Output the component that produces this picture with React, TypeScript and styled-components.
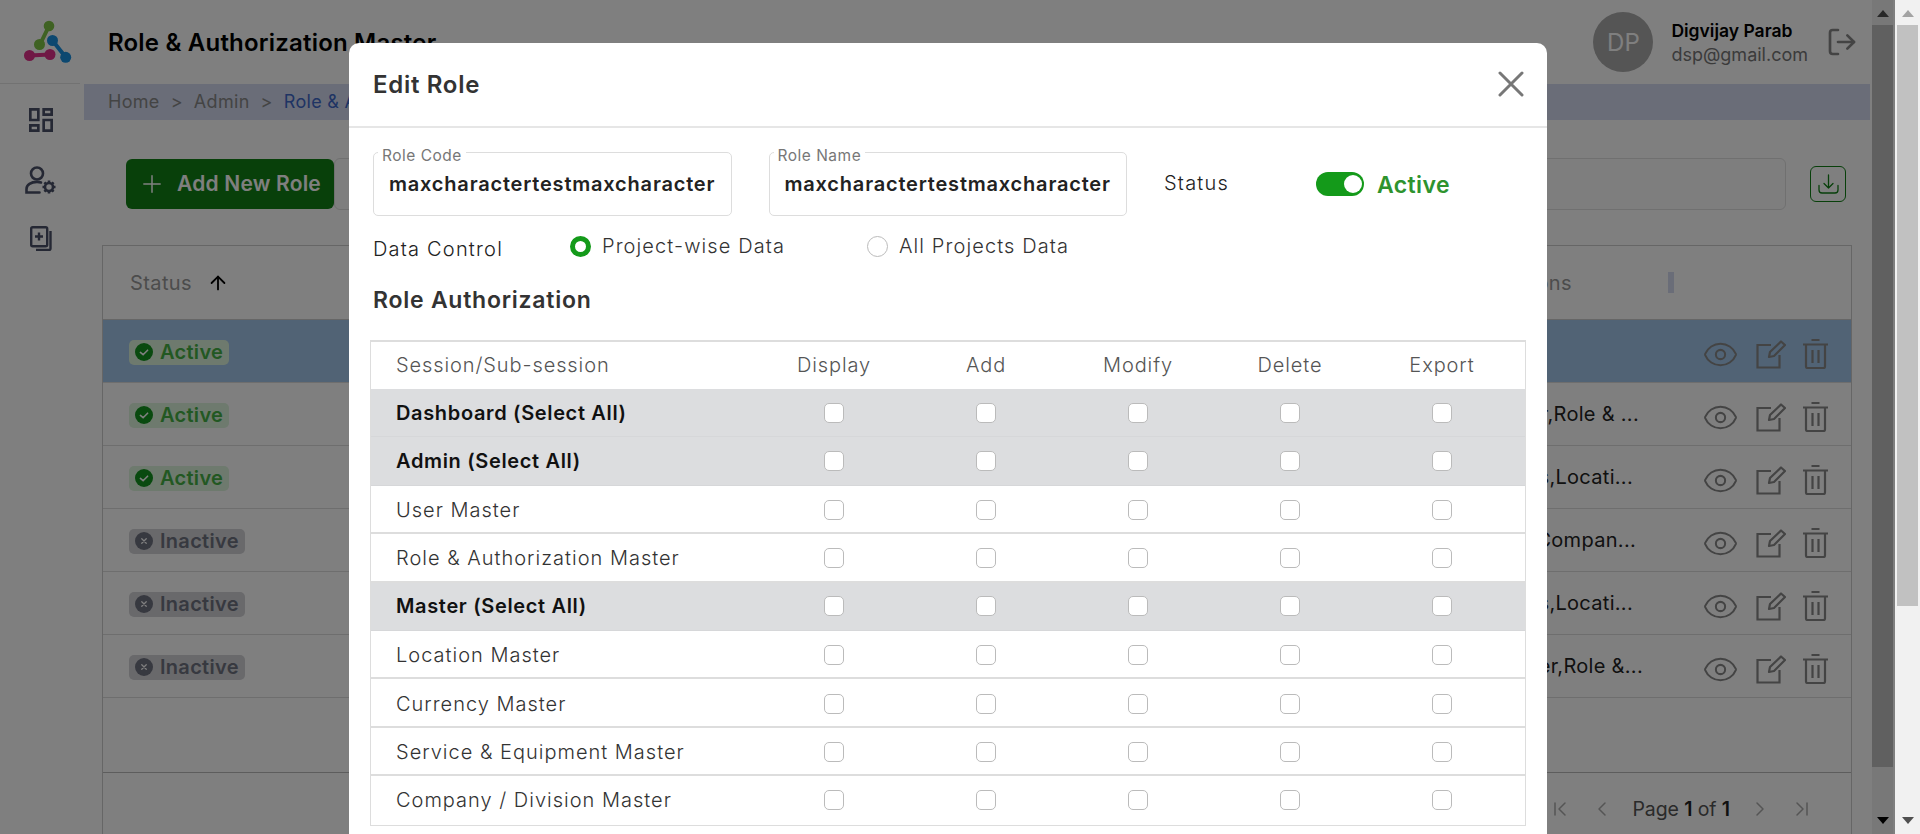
import { ArrowUp, ChevronFirst, ChevronLast, ChevronLeft, ChevronRight, Eye, LogOut, Plus } from 'lucide-react'
import { MdOutlineDashboard } from 'react-icons/md'
import styled, { createGlobalStyle } from 'styled-components'

const GlobalStyle = createGlobalStyle`
  * {
    box-sizing: border-box;
  }
  html, body {
    margin: 0;
    height: 834px;
    overflow: hidden;
    background: #fff;
    font-family: Inter, 'Open Sans', sans-serif;
    color: #222;
  }
`

type RoleRow = {
  status: 'Active' | 'Inactive'
  access: string
  end: number
  selected?: boolean
}

const roleRows: RoleRow[] = [
  { status: 'Active', access: '', end: 0, selected: true },
  { status: 'Active', access: 'Dashboard,User Master,Role & ...', end: 4 },
  { status: 'Active', access: 'Dashboard,User Masters,Locati...', end: 10 },
  { status: 'Inactive', access: 'Dashboard,Currency,Compan...', end: 7 },
  { status: 'Inactive', access: 'Dashboard,User Masters,Locati...', end: 10 },
  { status: 'Inactive', access: 'Dashboard,User Master,Role &...', end: 0 },
]

type AuthRow = {
  name: string
  group?: boolean
}

const authRows: AuthRow[] = [
  { name: 'Dashboard (Select All)', group: true },
  { name: 'Admin (Select All)', group: true },
  { name: 'User Master' },
  { name: 'Role & Authorization Master' },
  { name: 'Master (Select All)', group: true },
  { name: 'Location Master' },
  { name: 'Currency Master' },
  { name: 'Service & Equipment Master' },
  { name: 'Company / Division Master' },
]

const permissions = ['Display', 'Add', 'Modify', 'Delete', 'Export']

const Logo = () => (
  <svg width="48" height="46" viewBox="24 20 48 46">
    <g strokeLinecap="round">
      <line x1="49" y1="26" x2="40" y2="44.5" stroke="#7ec446" strokeWidth="4" />
      <circle cx="49" cy="26" r="5.3" fill="#7ec446" />
      <circle cx="39.5" cy="44.5" r="5.5" fill="#7ec446" />
      <line x1="52.5" y1="40.5" x2="65.7" y2="57.3" stroke="#1890e0" strokeWidth="4" />
      <circle cx="52.5" cy="40.5" r="5.5" fill="#1890e0" />
      <circle cx="65.7" cy="57.3" r="5.5" fill="#1890e0" />
      <line x1="29.5" y1="55.5" x2="50" y2="54.5" stroke="#e0308a" strokeWidth="4" />
      <circle cx="29.5" cy="55.5" r="5.5" fill="#e0308a" />
      <circle cx="50" cy="54.5" r="5.5" fill="#e0308a" />
    </g>
  </svg>
)

const UserGearIcon = () => (
  <svg width="32" height="30" viewBox="0 0 32 30" fill="none" stroke="#4a5068" strokeWidth="2.6">
    <circle cx="12" cy="7.5" r="6" />
    <path d="M16 16.500c-1.200-.4-2.600-.6-4-.6-6 0-10.500 3-10.500 7v3.600h13" strokeLinecap="round" />
    <circle cx="24" cy="21" r="4" />
    <path
      d="M24 14.500v2.500M24 25v2.500M17.500 21h2.500M28 21h2.500M19.400 16.400l1.800 1.800M26.800 23.800l1.800 1.800M19.400 25.600l1.800-1.800M26.800 18.200l1.800-1.800"
      strokeWidth="2.600"
    />
  </svg>
)

const PagesPlusIcon = () => (
  <svg width="22" height="25" viewBox="0 0 22 25" fill="none" stroke="#4a5068" strokeWidth="2.400">
    <rect x="1.200" y="1.200" width="16" height="19" rx="1.500" />
    <path d="M20.500 5v17.500a1.500 1.500 0 0 1-1.500 1.500H6" />
    <path d="M9 6.500v8M5 10.500h8" />
  </svg>
)

const EditIcon = () => (
  <svg width="30" height="29" viewBox="0 0 30 29" fill="none" stroke="#888" strokeWidth="2.200">
    <path d="M15 5H1.500v22.500h22V15" />
    <path d="M13 17l1-5L25 1.500l4 3.500L18 16z" strokeLinejoin="round" />
  </svg>
)

const TrashIcon = () => (
  <svg width="25" height="30" viewBox="0 0 25 30" fill="none" stroke="#888" strokeWidth="2.200">
    <path d="M0 5.500h25M8.500 1h8" />
    <path d="M3 5.500v22a1.500 1.500 0 0 0 1.500 1.500h16a1.500 1.500 0 0 0 1.500-1.500v-22" />
    <path d="M9.500 11v13M15.500 11v13" />
  </svg>
)

const StatusIcon = ({ active }: { active: boolean }) => (
  <svg width="18" height="18" viewBox="0 0 20 20">
    <circle cx="10" cy="10" r="10" fill={active ? '#12941e' : '#6f7280'} />
    {active ? (
      <path d="M6 10.500l3 2.500 5-5" fill="none" stroke="#fff" strokeWidth="1.800" strokeLinecap="round" />
    ) : (
      <path d="M7.500 7.500l5 5M12.500 7.500l-5 5" fill="none" stroke="#fff" strokeWidth="1.400" strokeLinecap="round" />
    )}
  </svg>
)

const DownloadIcon = () => (
  <svg width="21" height="20" viewBox="0 0 21 20" fill="none" stroke="#108015" strokeWidth="1.300">
    <path d="M10.500 1v13M6 9.500l4.500 4.500 4.500-4.500" strokeLinecap="round" strokeLinejoin="round" />
    <path d="M1 11.500v4.500a3 3 0 0 0 3 3h13a3 3 0 0 0 3-3v-4.500" strokeLinecap="round" />
  </svg>
)

const CloseIcon = () => (
  <svg width="26" height="26" viewBox="0 0 26 26" stroke="#777" strokeWidth="3" strokeLinecap="round">
    <path d="M2 2l22 22M24 2L2 24" />
  </svg>
)

export default function App() {
  return (
    <>
      <GlobalStyle />
      <Screen>
        <Page>
          <Sidebar>
            <LogoCell>
              <Logo />
            </LogoCell>
            <SideIcons>
              <MdOutlineDashboard size={32} color="#4a5068" />
              <UserGearIcon />
              <PagesPlusIcon />
            </SideIcons>
          </Sidebar>

          <Content>
            <TopBar>
              <PageTitle>Role &amp; Authorization Master</PageTitle>
              <UserBox>
                <Avatar>DP</Avatar>
                <UserText>
                  <UserName>Digvijay Parab</UserName>
                  <UserMail>dsp@gmail.com</UserMail>
                </UserText>
                <LogOut size={32} color="#888" strokeWidth={2} />
              </UserBox>
            </TopBar>
            <Breadcrumb>
              <span>Home</span>
              <span>&gt;</span>
              <span>Admin</span>
              <span>&gt;</span>
              <CrumbActive>Role &amp; Authorization Master</CrumbActive>
            </Breadcrumb>

            <Toolbar>
              <AddButton>
                <Plus size={28} strokeWidth={1.3} />
                Add New Role
              </AddButton>
              <Search />
              <ExportButton>
                <DownloadIcon />
              </ExportButton>
            </Toolbar>

            <RolesTable>
              <RolesHead>
                <StatusHead>
                  Status <ArrowUp size={22} color="#000" strokeWidth={2} />
                </StatusHead>
                <ActionsHead>
                  Actions
                  <ColumnHandle />
                </ActionsHead>
              </RolesHead>
              {roleRows.map((row, i) => (
                <RoleLine key={i} $selected={row.selected}>
                  <Pill $active={row.status === 'Active'}>
                    <StatusIcon active={row.status === 'Active'} />
                    {row.status}
                  </Pill>
                  <AccessText $end={row.end}>{row.access}</AccessText>
                  <RowActions>
                    <Eye size={37} color="#888" strokeWidth={1.300} />
                    <EditIcon />
                    <TrashIcon />
                  </RowActions>
                </RoleLine>
              ))}
              <EmptyRow />
              <Pager>
                <ChevronFirst size={24} color="#aaa" strokeWidth={1.500} />
                <ChevronLeft size={24} color="#aaa" strokeWidth={1.500} />
                <PagerText>
                  Page <b>1</b> of <b>1</b>
                </PagerText>
                <ChevronRight size={24} color="#aaa" strokeWidth={1.500} />
                <ChevronLast size={24} color="#aaa" strokeWidth={1.500} />
              </Pager>
            </RolesTable>
          </Content>

          <InnerScrollbar>
            <ArrowUpGlyph />
            <InnerThumb />
            <ArrowDownGlyph />
          </InnerScrollbar>

          <Overlay>
            <Modal>
              <ModalHead>
                <ModalTitle>Edit Role</ModalTitle>
                <CloseIcon />
              </ModalHead>
              <ModalBody>
                <FieldRow>
                  <Field>
                    <FieldLabel>Role Code</FieldLabel>
                    maxcharactertestmaxcharacter
                  </Field>
                  <Field>
                    <FieldLabel>Role Name</FieldLabel>
                    maxcharactertestmaxcharacter
                  </Field>
                  <StatusLabel>Status</StatusLabel>
                  <Toggle />
                  <ToggleText>Active</ToggleText>
                </FieldRow>
                <ControlRow>
                  <ControlLabel>Data Control</ControlLabel>
                  <RadioOption>
                    <Radio $checked />
                    Project-wise Data
                  </RadioOption>
                  <RadioOption>
                    <Radio />
                    All Projects Data
                  </RadioOption>
                </ControlRow>
                <SectionTitle>Role Authorization</SectionTitle>
                <AuthTable>
                  <AuthHead>
                    <span>Session/Sub-session</span>
                    {permissions.map(name => (
                      <HeadCell key={name}>{name}</HeadCell>
                    ))}
                  </AuthHead>
                  {authRows.map(row => (
                    <AuthLine key={row.name} $group={row.group}>
                      <span>{row.name}</span>
                      {permissions.map(name => (
                        <CheckCell key={name}>
                          <CheckBox />
                        </CheckCell>
                      ))}
                    </AuthLine>
                  ))}
                </AuthTable>
              </ModalBody>
            </Modal>
          </Overlay>
        </Page>

        <OuterScrollbar>
          <ArrowUpGlyph $light />
          <OuterThumb />
          <ArrowDownGlyph $light />
        </OuterScrollbar>
      </Screen>
    </>
  )
}

//style
const Screen = styled.div`
  display: flex;
  width: 1920px;
  height: 834px;
  overflow: hidden;
`

const Page = styled.div`
  position: relative;
  display: flex;
  width: 1895px;
  height: 834px;
  overflow: hidden;
`

const Sidebar = styled.aside`
  flex: 0 0 84px;
  background: #fff;
`

const LogoCell = styled.div`
  height: 84px;
  padding: 20px 0 0 24px;
  margin-right: 4px;
  border-bottom: 1px solid #e4e4e4;
`

const SideIcons = styled.div`
  display: flex;
  flex-direction: column;
  align-items: center;
  gap: 30px;
  padding: 20px 3px 0 0;
`

const Content = styled.main`
  flex: 0 0 1786px;
  min-width: 0;
`

const TopBar = styled.header`
  display: flex;
  align-items: center;
  justify-content: space-between;
  height: 84px;
  padding: 0 12px 0 24px;
`

const PageTitle = styled.h1`
  margin: 0;
  font-size: 24px;
  font-weight: 600;
  letter-spacing: 0.2px;
  color: #000;
`

const UserBox = styled.div`
  display: flex;
  align-items: center;
`

const Avatar = styled.div`
  display: flex;
  align-items: center;
  justify-content: center;
  width: 60px;
  height: 60px;
  margin-right: 18px;
  border-radius: 50%;
  background: #aaa;
  font-size: 24px;
  color: #fff;
`

const UserText = styled.div`
  display: flex;
  flex-direction: column;
  gap: 3px;
  margin-right: 18px;
`

const UserName = styled.span`
  font-size: 17.5px;
  font-weight: 600;
  color: #000;
`

const UserMail = styled.span`
  font-size: 18px;
  color: #777;
`

const Breadcrumb = styled.nav`
  display: flex;
  align-items: center;
  gap: 11px;
  height: 36px;
  padding: 0 0 2px 24px;
  background: #d4dbf0;
  font-size: 18px;
  letter-spacing: 0.3px;
  color: #888;
`

const CrumbActive = styled.span`
  color: #3f68c8;
`

const Toolbar = styled.div`
  display: flex;
  align-items: center;
  height: 53px;
  margin: 37px 24px 0 42px;
`

const AddButton = styled.button`
  display: flex;
  align-items: center;
  gap: 11px;
  width: 208px;
  height: 50px;
  padding: 0 0 0 12px;
  border: 0;
  border-radius: 6px;
  background: #108015;
  font-family: inherit;
  font-size: 21px;
  font-weight: 600;
  letter-spacing: 0.2px;
  color: #fff;
`

const Search = styled.div`
  flex: 1;
  height: 52px;
  margin-right: 24px;
  border: 1px solid #e0e0e0;
  border-radius: 6px;
  background: #fdfdfd;
`

const ExportButton = styled.button`
  display: flex;
  align-items: center;
  justify-content: center;
  width: 36px;
  height: 36px;
  padding: 0;
  border: 1.500px solid #108015;
  border-radius: 6px;
  background: #fff;
`

const RolesTable = styled.section`
  width: 1750px;
  margin: 35px 0 0 18px;
  border: 1px solid #ccc;
`

const RolesHead = styled.div`
  display: flex;
  align-items: center;
  justify-content: space-between;
  height: 74px;
  border-bottom: 1px solid #ccc;
  font-size: 20px;
  letter-spacing: 0.4px;
  color: #999;
`

const StatusHead = styled.div`
  display: flex;
  align-items: center;
  gap: 15px;
  padding-left: 27px;
`

const ActionsHead = styled.div`
  display: flex;
  align-items: center;
  gap: 96px;
  padding-right: 177px;
`

const ColumnHandle = styled.i`
  width: 6px;
  height: 21px;
  background: #d4dbf0;
`

const RoleLine = styled.div<{ $selected?: boolean }>`
  display: flex;
  align-items: center;
  height: 63px;
  padding-left: 26px;
  border-bottom: 1px solid #ddd;
  background: ${p => (p.$selected ? '#a2c6ea' : '#fff')};
`

const Pill = styled.span<{ $active: boolean }>`
  display: flex;
  align-items: center;
  gap: 7px;
  height: 25px;
  margin-top: 2px;
  padding: 0 6px;
  border-radius: 5px;
  background: ${p => (p.$active ? '#dcf4dc' : '#d2d2d6')};
  font-size: 20px;
  font-weight: 600;
  letter-spacing: 0.3px;
  color: ${p => (p.$active ? '#45b045' : '#6f7280')};
`

const AccessText = styled.span<{ $end: number }>`
  flex: 1;
  padding-right: ${p => p.$end}px;
  text-align: right;
  font-size: 20px;
  letter-spacing: 0.3px;
  white-space: nowrap;
  color: #222;
`

const RowActions = styled.div`
  display: flex;
  align-items: center;
  justify-content: flex-end;
  gap: 17px;
  width: 208px;
  padding: 6px 23px 0 0;
`

const EmptyRow = styled.div`
  height: 75px;
  border-bottom: 1px solid #bbb;
`

const Pager = styled.div`
  display: flex;
  align-items: center;
  justify-content: flex-end;
  gap: 18px;
  height: 73px;
  padding: 0 37px 2px 0;
`

const PagerText = styled.span`
  font-size: 19.5px;
  letter-spacing: -0.1px;
  color: #555;

  b {
    font-weight: 600;
    color: #222;
  }
`

const InnerScrollbar = styled.div`
  position: relative;
  flex: 0 0 21px;
  margin-left: 2px;
  background: #f1f1f1;
`

const InnerThumb = styled.div`
  height: 742px;
  margin-top: 25px;
  background: #c1c1c1;
`

const ArrowUpGlyph = styled.i<{ $light?: boolean }>`
  position: absolute;
  top: 10px;
  left: calc(50% - 6px);
  border: 6px solid transparent;
  border-top: 0;
  border-bottom: 7px solid ${p => (p.$light ? '#a3a3a3' : '#505050')};
`

const ArrowDownGlyph = styled.i<{ $light?: boolean }>`
  position: absolute;
  bottom: 10px;
  left: calc(50% - 6px);
  border: 6px solid transparent;
  border-bottom: 0;
  border-top: 7px solid ${p => (p.$light ? '#505050' : '#000')};
`

const OuterScrollbar = styled.div`
  position: relative;
  flex: 0 0 25px;
  padding-left: 2px;
  background: #f1f1f1;
`

const OuterThumb = styled.div`
  width: 21px;
  height: 581px;
  margin-top: 25px;
  background: #c1c1c1;
`

const Overlay = styled.div`
  position: absolute;
  inset: 0;
  background: rgba(0, 0, 0, 0.5);
`

const Modal = styled.div`
  width: 1198px;
  height: 860px;
  margin: 43px 0 0 349px;
  border-radius: 10px;
  background: #fff;
`

const ModalHead = styled.div`
  display: flex;
  align-items: center;
  justify-content: space-between;
  height: 85px;
  padding: 0 23px 1px 24px;
  border-bottom: 2px solid #e6e6e6;
`

const ModalTitle = styled.h2`
  margin: 0;
  font-size: 24px;
  font-weight: 600;
  letter-spacing: 0.7px;
  color: #333;
`

const ModalBody = styled.div`
  padding: 24px 21px 0 24px;
`

const FieldRow = styled.div`
  display: flex;
  align-items: center;
`

const Field = styled.div`
  position: relative;
  display: flex;
  align-items: center;
  width: 358.5px;
  height: 64px;
  margin-right: 37px;
  padding-left: 15px;
  border: 1px solid #ddd;
  border-radius: 5px;
  font-size: 20px;
  font-weight: 600;
  letter-spacing: 0.8px;
  white-space: nowrap;
  color: #222;
`

const FieldLabel = styled.label`
  position: absolute;
  top: -6px;
  left: 4px;
  padding: 0 4px;
  background: #fff;
  font-size: 15.5px;
  font-weight: 400;
  line-height: 17px;
  letter-spacing: 0.5px;
  color: #777;
`

const StatusLabel = styled.span`
  width: 152px;
  margin-top: -2px;
  font-size: 20px;
  font-weight: 300;
  letter-spacing: 1.2px;
  color: #222;
`

const Toggle = styled.span`
  position: relative;
  width: 48px;
  height: 24px;
  margin-right: 13px;
  border-radius: 12px;
  background: #149a1a;

  &::after {
    content: '';
    position: absolute;
    top: 3px;
    right: 2px;
    width: 18px;
    height: 18px;
    border-radius: 50%;
    background: #fff;
  }
`

const ToggleText = styled.span`
  margin-top: 2px;
  font-size: 23px;
  font-weight: 600;
  letter-spacing: 0.4px;
  color: #2e932e;
`

const ControlRow = styled.div`
  display: flex;
  align-items: center;
  height: 22px;
  margin-top: 19px;
`

const ControlLabel = styled.span`
  width: 197px;
  padding-top: 6px;
  font-size: 20px;
  font-weight: 300;
  letter-spacing: 1.2px;
  white-space: nowrap;
  color: #222;
`

const RadioOption = styled.label`
  display: flex;
  align-items: center;
  gap: 11px;
  margin-right: 82px;
  font-size: 20px;
  font-weight: 300;
  letter-spacing: 1.1px;
  color: #333;
`

const Radio = styled.span<{ $checked?: boolean }>`
  width: 21px;
  height: 21px;
  border-radius: 50%;
  border: ${p => (p.$checked ? '5px solid #149a1a' : '1px solid #bbb')};
  background: #fff;
`

const SectionTitle = styled.h3`
  margin: 31px 0 0;
  font-size: 23px;
  font-weight: 600;
  line-height: 24px;
  letter-spacing: 0.75px;
  color: #333;
`

const AuthTable = styled.div`
  width: 1156px;
  margin: 28px 0 0 -3px;
  border: 1px solid #ddd;
  border-top-width: 2px;
`

const AuthHead = styled.div`
  display: grid;
  grid-template-columns: 362px repeat(5, 152px);
  align-items: center;
  height: 47px;
  padding: 0 0 2px 25px;
  font-size: 20px;
  font-weight: 300;
  letter-spacing: 0.9px;
  color: #555;
`

const HeadCell = styled.span`
  text-align: center;
`

const AuthLine = styled.div<{ $group?: boolean }>`
  display: grid;
  grid-template-columns: 362px repeat(5, 152px);
  align-items: center;
  height: 48.4px;
  padding: ${p => (p.$group ? '0' : '2px')} 0 0 25px;
  border-bottom: ${p => (p.$group ? '1px solid #d6d7d9' : '2px solid #ddd')};
  background: ${p => (p.$group ? '#dcdddf' : '#fff')};
  font-size: 20px;
  font-weight: ${p => (p.$group ? 600 : 300)};
  letter-spacing: ${p => (p.$group ? '0.65px' : '1px')};
  color: ${p => (p.$group ? '#111' : '#333')};

  &:last-child {
    padding-top: 0;
    border-bottom: 0;
  }
`

const CheckCell = styled.span`
  display: flex;
  justify-content: center;
`

const CheckBox = styled.i`
  width: 20px;
  height: 20px;
  border: 1px solid #bbb;
  border-radius: 5px;
  background: #fff;
`
